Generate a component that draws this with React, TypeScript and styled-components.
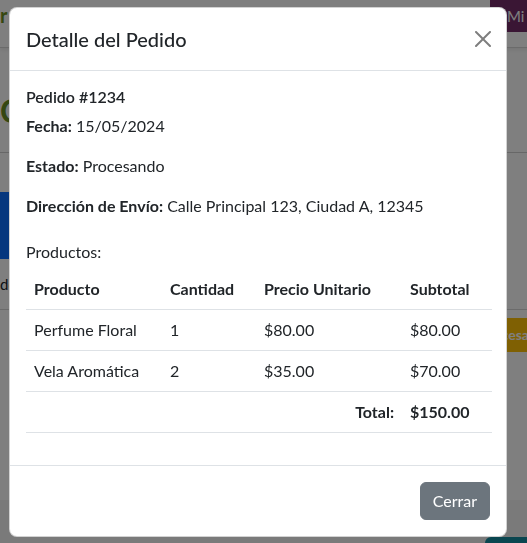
import styled, { createGlobalStyle } from 'styled-components';

const GlobalStyle = createGlobalStyle`
  html, body {
    margin: 0;
    padding: 0;
    overflow: hidden;
    background: #ffffff;
  }
  body {
    font-family: Lato, "Noto Sans", "Liberation Sans", sans-serif;
    color: #212529;
  }
`;

/* ---------- page behind the backdrop ---------- */

const Page = styled.div`
  width: 580px;
  height: 543px;
  display: flex;
  flex-direction: column;
  background: #ffffff;
`;

const Navbar = styled.nav`
  height: 47px;
  display: flex;
  justify-content: space-between;
  align-items: flex-start;
  border-bottom: 1px solid #d6d6d6;
  box-shadow: 0 2px 4px rgba(0, 0, 0, 0.08);
`;

const Brand = styled.span`
  color: #6b8e23;
  font-weight: 700;
  font-size: 20px;
  line-height: 30px;
`;

const NavButton = styled.span`
  width: 90px;
  height: 32px;
  background: #742c68;
  color: #ffffff;
  font-size: 15px;
  line-height: 32px;
  padding-left: 17px;
  box-sizing: border-box;
`;

const Main = styled.main`
  flex: 1;
  display: flex;
  flex-direction: column;
  padding-top: 44px;
`;

const Heading = styled.h2`
  margin: 0;
  color: #6b8e23;
  font-size: 32px;
  line-height: 38px;
  font-weight: 700;
`;

const Rule = styled.hr`
  margin: 22px 0 0;
  border: 0;
  border-top: 1px solid #cfcfcf;
`;

const Banner = styled.div`
  margin-top: 39px;
  width: 320px;
  height: 67px;
  background: #0d6efd;
`;

const Row = styled.div<{ $line?: boolean }>`
  display: grid;
  grid-template-columns: 1fr 110px;
  align-items: center;
  height: 50px;
  border-bottom: ${(p) => (p.$line ? '1px solid #d6d6d6' : '0')};
  font-size: 15px;
`;

const Badge = styled.span`
  justify-self: start;
  height: 34px;
  line-height: 34px;
  padding: 0 10px;
  background: #ffc107;
  color: #ffffff;
  font-weight: 700;
  font-size: 14px;
`;

const Footer = styled.footer`
  height: 43px;
  background: #f4f4f4;
  display: flex;
  justify-content: flex-end;
  align-items: flex-end;
`;

const FooterButton = styled.span`
  width: 95px;
  height: 6px;
  background: #148ca0;
  border-radius: 8px 8px 0 0;
`;

/* ---------- modal ---------- */

const Backdrop = styled.div`
  position: fixed;
  inset: 0;
  background: rgba(0, 0, 0, 0.5);
  padding: 7px 0 0 9px;
`;

const Dialog = styled.div`
  width: 498px;
  background: #ffffff;
  border: 1px solid rgba(0, 0, 0, 0.175);
  border-radius: 8px;
  box-sizing: border-box;
  display: flex;
  flex-direction: column;
`;

const Header = styled.div`
  display: flex;
  align-items: center;
  justify-content: space-between;
  padding: 16px;
  border-bottom: 1px solid #dee2e6;
`;

const Title = styled.h5`
  margin: 0;
  font-size: 20px;
  font-weight: 500;
  line-height: 30px;
`;

const CloseButton = styled.button`
  width: 24px;
  height: 24px;
  padding: 4px;
  margin-right: -5px;
  border: 0;
  background: transparent;
  opacity: 0.5;
  color: #000000;
  display: flex;
  cursor: pointer;
`;

const Body = styled.div`
  padding: 16px;
`;

const OrderNo = styled.h6`
  margin: 0 0 8px;
  font-size: 16px;
  font-weight: 600;
  line-height: 19.2px;
`;

const Line = styled.p`
  margin: 0 0 16px;
  font-size: 16px;
  line-height: 24px;
`;

const Label = styled.strong`
  font-weight: 700;
`;

const SectionTitle = styled.h6`
  margin: 24px 0 8px;
  font-size: 16px;
  font-weight: 400;
  line-height: 19.2px;
`;

const Table = styled.table`
  width: 100%;
  table-layout: fixed;
  border-collapse: collapse;
  margin-bottom: 16px;
  font-size: 16px;
  line-height: 24px;
`;

const Th = styled.th<{ $right?: boolean }>`
  padding: 8px;
  text-align: ${(p) => (p.$right ? 'right' : 'left')};
  font-weight: 700;
  border-bottom: 1px solid #dee2e6;
  white-space: nowrap;
`;

const Td = styled.td<{ $right?: boolean; $bold?: boolean }>`
  padding: 8px;
  text-align: ${(p) => (p.$right ? 'right' : 'left')};
  font-weight: ${(p) => (p.$bold ? 700 : 400)};
  border-bottom: 1px solid #dee2e6;
  white-space: nowrap;
`;

const ModalFooter = styled.div`
  display: flex;
  justify-content: flex-end;
  padding: 12px;
  border-top: 1px solid #dee2e6;
`;

const SecondaryButton = styled.button`
  margin: 4px;
  height: 38px;
  padding: 6px 12px;
  border: 1px solid #6c757d;
  border-radius: 6px;
  background: #6c757d;
  color: #ffffff;
  font-family: inherit;
  font-size: 16px;
  line-height: 24px;
  cursor: pointer;
`;

const items = [
  { name: 'Perfume Floral', qty: 1, price: '$80.00', subtotal: '$80.00' },
  { name: 'Vela Aromática', qty: 2, price: '$35.00', subtotal: '$70.00' },
];

const App = () => {
  return (
    <>
      <GlobalStyle />
      <Page>
        <Navbar>
          <Brand>r</Brand>
          <NavButton>Mi Cuenta</NavButton>
        </Navbar>
        <Main>
          <Heading>Compras</Heading>
          <Rule />
          <Banner />
          <Row $line>de pedidos</Row>
          <Row>
            <span />
            <Badge>Procesando</Badge>
          </Row>
          <div style={{ flex: 1 }} />
          <Footer>
            <FooterButton />
          </Footer>
        </Main>
      </Page>

      <Backdrop>
        <Dialog>
          <Header>
            <Title>Detalle del Pedido</Title>
            <CloseButton aria-label="Cerrar">
              <svg width="16" height="16" viewBox="0 0 16 16" fill="currentColor">
                <path d="M.293.293a1 1 0 0 1 1.414 0L8 6.586 14.293.293a1 1 0 1 1 1.414 1.414L9.414 8l6.293 6.293a1 1 0 0 1-1.414 1.414L8 9.414l-6.293 6.293a1 1 0 0 1-1.414-1.414L6.586 8 .293 1.707a1 1 0 0 1 0-1.414z" />
              </svg>
            </CloseButton>
          </Header>
          <Body>
            <OrderNo>Pedido #1234</OrderNo>
            <Line>
              <Label>Fecha:</Label> 15/05/2024
            </Line>
            <Line>
              <Label>Estado:</Label> Procesando
            </Line>
            <Line>
              <Label>Dirección de Envío:</Label> Calle Principal 123, Ciudad A, 12345
            </Line>
            <SectionTitle>Productos:</SectionTitle>
            <Table>
              <colgroup>
                <col style={{ width: 136 }} />
                <col style={{ width: 94 }} />
                <col style={{ width: 146 }} />
                <col style={{ width: 90 }} />
              </colgroup>
              <thead>
                <tr>
                  <Th>Producto</Th>
                  <Th>Cantidad</Th>
                  <Th>Precio Unitario</Th>
                  <Th>Subtotal</Th>
                </tr>
              </thead>
              <tbody>
                {items.map((it) => (
                  <tr key={it.name}>
                    <Td>{it.name}</Td>
                    <Td>{it.qty}</Td>
                    <Td>{it.price}</Td>
                    <Td>{it.subtotal}</Td>
                  </tr>
                ))}
                <tr>
                  <Td colSpan={3} $right $bold>
                    Total:
                  </Td>
                  <Td $bold>$150.00</Td>
                </tr>
              </tbody>
            </Table>
          </Body>
          <ModalFooter>
            <SecondaryButton>Cerrar</SecondaryButton>
          </ModalFooter>
        </Dialog>
      </Backdrop>
    </>
  );
};

export default App;
